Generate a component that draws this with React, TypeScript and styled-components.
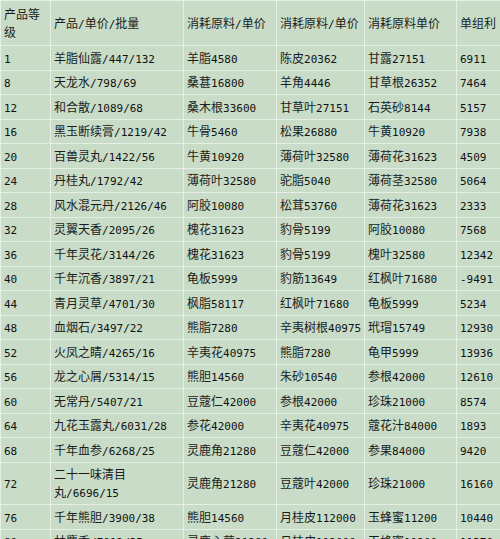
import React from "react";
import styled, { createGlobalStyle } from "styled-components";

const GlobalStyle = createGlobalStyle`
  html, body {
    margin: 0;
    padding: 0;
    background: #c8dcc8;
    overflow: hidden;
  }
`;

const Page = styled.div`
  width: 500px;
  height: 539px;
  overflow: hidden;
  background: #c8dcc8;
`;

const Table = styled.table`
  table-layout: fixed;
  width: 526px;
  border-collapse: collapse;
  border-top: 1px solid #eef4ee;
  font-family: "Noto Sans CJK SC", sans-serif;
  font-size: 12px;
  color: #1c1c1c;
`;

const Cell = styled.td`
  border: 1px solid #e6efe6;
  padding: 2.75px 1px 2.75px 3px;
  height: 18px;
  line-height: 18px;
  vertical-align: middle;
  text-align: left;
  font-weight: normal;
  background: #c8dcc8;
`;

const HeadCell = styled(Cell).attrs({ as: "th" })`
  padding-top: 4px;
  padding-bottom: 4px;
`;

// ascii runs (digits, slashes) set in a narrower mono face like the original bitmap font
const Latin = styled.span`
  font-family: "DejaVu Sans Mono", monospace;
  font-size: 11px;
  line-height: 0;
  color: #111;
`;

const widths = [50, 133, 93, 88, 92, 70];

const header = ["产品等级", "产品/单价/批量", "消耗原料/单价", "消耗原料/单价", "消耗原料单价", "单组利"];

const rows: string[][] = [
  ["1", "羊脂仙露/447/132", "羊脂4580", "陈皮20362", "甘露27151", "6911"],
  ["8", "天龙水/798/69", "桑葚16800", "羊角4446", "甘草根26352", "7464"],
  ["12", "和合散/1089/68", "桑木根33600", "甘草叶27151", "石英砂8144", "5157"],
  ["16", "黑玉断续膏/1219/42", "牛骨5460", "松果26880", "牛黄10920", "7938"],
  ["20", "百兽灵丸/1422/56", "牛黄10920", "薄荷叶32580", "薄荷花31623", "4509"],
  ["24", "丹桂丸/1792/42", "薄荷叶32580", "驼脂5040", "薄荷茎32580", "5064"],
  ["28", "风水混元丹/2126/46", "阿胶10080", "松茸53760", "薄荷花31623", "2333"],
  ["32", "灵翼天香/2095/26", "槐花31623", "豹骨5199", "阿胶10080", "7568"],
  ["36", "千年灵花/3144/26", "槐花31623", "豹骨5199", "槐叶32580", "12342"],
  ["40", "千年沉香/3897/21", "龟板5999", "豹筋13649", "红枫叶71680", "-9491"],
  ["44", "青月灵草/4701/30", "枫脂58117", "红枫叶71680", "龟板5999", "5234"],
  ["48", "血烟石/3497/22", "熊脂7280", "辛夷树根40975", "玳瑁15749", "12930"],
  ["52", "火凤之睛/4265/16", "辛夷花40975", "熊脂7280", "龟甲5999", "13936"],
  ["56", "龙之心屑/5314/15", "熊胆14560", "朱砂10540", "参根42000", "12610"],
  ["60", "无常丹/5407/21", "豆蔻仁42000", "参根42000", "珍珠21000", "8574"],
  ["64", "九花玉露丸/6031/28", "参花42000", "辛夷花40975", "蔻花汁84000", "1893"],
  ["68", "千年血参/6268/25", "灵鹿角21280", "豆蔻仁42000", "参果84000", "9420"],
  ["72", "二十一味清目丸/6696/15", "灵鹿角21280", "豆蔻叶42000", "珍珠21000", "16160"],
  ["76", "千年熊胆/3900/38", "熊胆14560", "月桂皮112000", "玉蜂蜜11200", "10440"],
  ["80", "林麝香/7012/35", "灵鹿心茸21280", "月桂皮112000", "玉蜂蜜11200", "11370"],
];

const renderText = (text: string) =>
  text.split(/([\x00-\x7F]+)/).map((part, i) =>
    /^[\x00-\x7F]+$/.test(part) ? <Latin key={i}>{part}</Latin> : part
  );

export default function App() {
  return (
    <Page>
      <GlobalStyle />
      <Table>
        <colgroup>
          {widths.map((w, i) => (
            <col key={i} style={{ width: w }} />
          ))}
        </colgroup>
        <thead>
          <tr>
            {header.map((h, i) => (
              <HeadCell key={i}>{renderText(h)}</HeadCell>
            ))}
          </tr>
        </thead>
        <tbody>
          {rows.map((row) => (
            <tr key={row[0]}>
              {row.map((v, i) => (
                <Cell key={i}>{renderText(v)}</Cell>
              ))}
            </tr>
          ))}
        </tbody>
      </Table>
    </Page>
  );
}
